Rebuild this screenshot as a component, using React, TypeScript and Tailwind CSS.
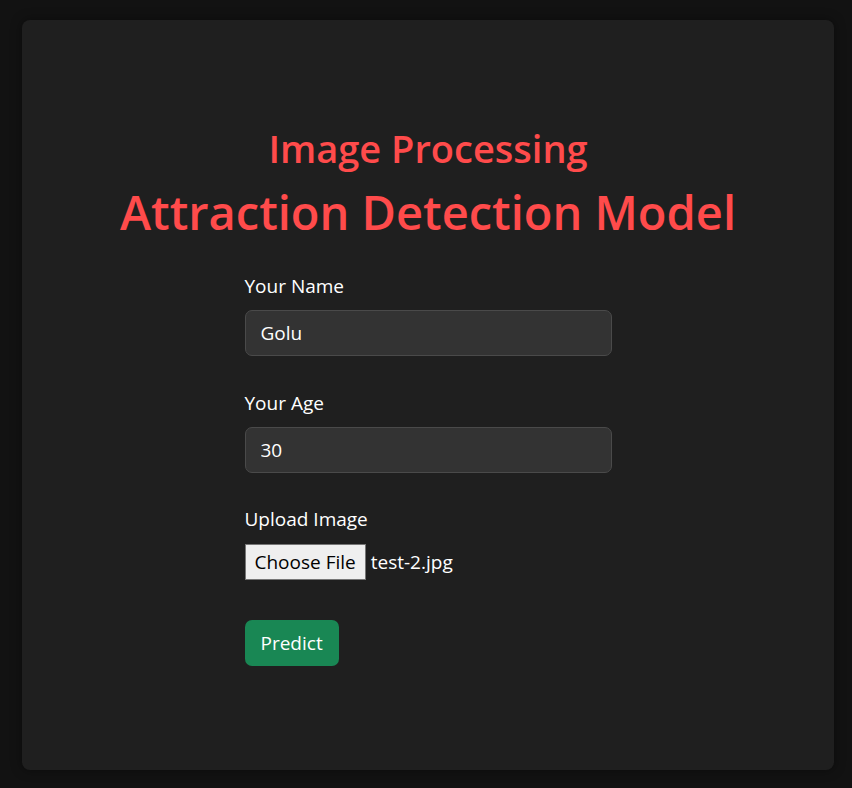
import { useState } from "react";

const font = "font-['Open_Sans',sans-serif]";

function Field({
  label,
  value,
  onChange,
}: {
  label: string;
  value: string;
  onChange: (v: string) => void;
}) {
  return (
    <div>
      <label className="block text-[19px] leading-[27px] text-white">{label}</label>
      <input
        value={value}
        onChange={(e) => onChange(e.target.value)}
        className="mt-[10px] box-border block h-[46px] w-full rounded-[7px] border border-[#4a4a4a] bg-[#333333] px-[15px] text-[19px] text-white outline-none"
      />
    </div>
  );
}

export default function App() {
  const [name, setName] = useState("Golu");
  const [age, setAge] = useState("30");

  return (
    <div className={`min-h-[788px] bg-[#121212] pt-[20px] pl-[22px] ${font}`}>
      <div className="h-[750px] w-[812px] rounded-[8px] bg-[#1f1f1f] pt-[106px] shadow-[0_0_12px_rgba(0,0,0,0.4)]">
        <h2 className="text-center text-[38px] leading-[44px] font-semibold text-[#ff4b4b]">
          Image Processing
        </h2>
        <h1 className="mt-[12px] text-center text-[47px] leading-[60px] font-semibold text-[#ff4b4b]">
          Attraction Detection Model
        </h1>

        <form className="mx-auto mt-[31px] w-[367px]" onSubmit={(e) => e.preventDefault()}>
          <Field label="Your Name" value={name} onChange={setName} />
          <div className="mt-[34px]">
            <Field label="Your Age" value={age} onChange={setAge} />
          </div>

          <div className="mt-[33px]">
            <label className="block text-[19px] leading-[27px] text-white">Upload Image</label>
            <div className="mt-[11px] flex items-center gap-[5px] text-[19px] text-white">
              <span className="box-border flex h-[36px] items-center border border-[#767676] bg-[#efefef] px-[9px] text-black">
                Choose File
              </span>
              <span>test-2.jpg</span>
            </div>
          </div>

          <button
            type="submit"
            className="mt-[40px] box-border h-[46px] rounded-[7px] bg-[#198754] px-[16px] text-[19px] text-white"
          >
            Predict
          </button>
        </form>
      </div>
    </div>
  );
}
